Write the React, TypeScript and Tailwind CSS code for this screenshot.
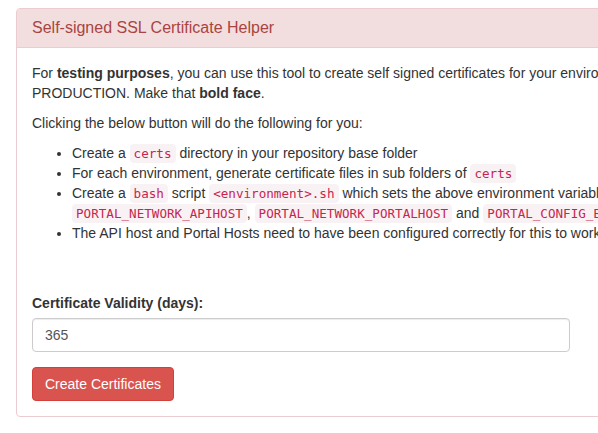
import React from 'react'

function Code({ children }: { children: React.ReactNode }) {
  return (
    <code className="rounded-[4px] bg-[#f9f2f4] px-[4px] py-[2px] text-[12.6px] leading-[14px] text-[#c7254e] [font-family:'DejaVu_Sans_Mono',monospace]">
      {children}
    </code>
  )
}

export default function App() {
  return (
    <div className="h-[433px] w-[598px] overflow-hidden bg-white text-[14px] leading-[20px] text-[#333] [font-family:'Liberation_Sans',Arial,sans-serif]">
      <div className="ml-[16px] mt-[8px] w-[900px] rounded-[4px] border border-[#ebccd1]">
        <div className="rounded-t-[3px] border-b border-[#ebccd1] bg-[#f2dede] px-[15px] py-[10px]">
          <h3 className="text-[16px] leading-[18px] font-medium text-[#a94442]">Self-signed SSL Certificate Helper</h3>
        </div>
        <div className="p-[15px]">
          <p className="mb-[10px]">
            For <b>testing purposes</b>, you can use this tool to create self signed certificates for your environments. DO NOT USE THEM IN
            <br />
            PRODUCTION. Make that <b>bold face</b>.
          </p>
          <p className="mb-[10px]">Clicking the below button will do the following for you:</p>
          <ul className="mb-[10px] list-disc pl-[40px]">
            <li>
              Create a <Code>certs</Code> directory in your repository base folder
            </li>
            <li>
              For each environment, generate certificate files in sub folders of <Code>certs</Code>
            </li>
            <li>
              Create a <Code>bash</Code> script <Code>&lt;environment&gt;.sh</Code> which sets the above environment variables
              <br />
              <Code>PORTAL_NETWORK_APIHOST</Code>, <Code>PORTAL_NETWORK_PORTALHOST</Code> and <Code>PORTAL_CONFIG_BASE</Code>
            </li>
            <li>The API host and Portal Hosts need to have been configured correctly for this to work.</li>
          </ul>
          <div className="h-[40px]" />
          <div className="mb-[15px]">
            <label className="mb-[5px] block font-bold">Certificate Validity (days):</label>
            <input
              className="block h-[34px] w-[538px] rounded-[4px] border border-[#ccc] px-[12px] py-[6px] text-[14px] text-[#555] shadow-[inset_0_1px_1px_rgba(0,0,0,0.075)] outline-none"
              defaultValue="365"
            />
          </div>
          <button className="rounded-[4px] border border-[#d43f3a] bg-[#d9534f] px-[12px] py-[6px] text-[14px] leading-[20px] text-white">
            Create Certificates
          </button>
        </div>
      </div>
    </div>
  )
}
